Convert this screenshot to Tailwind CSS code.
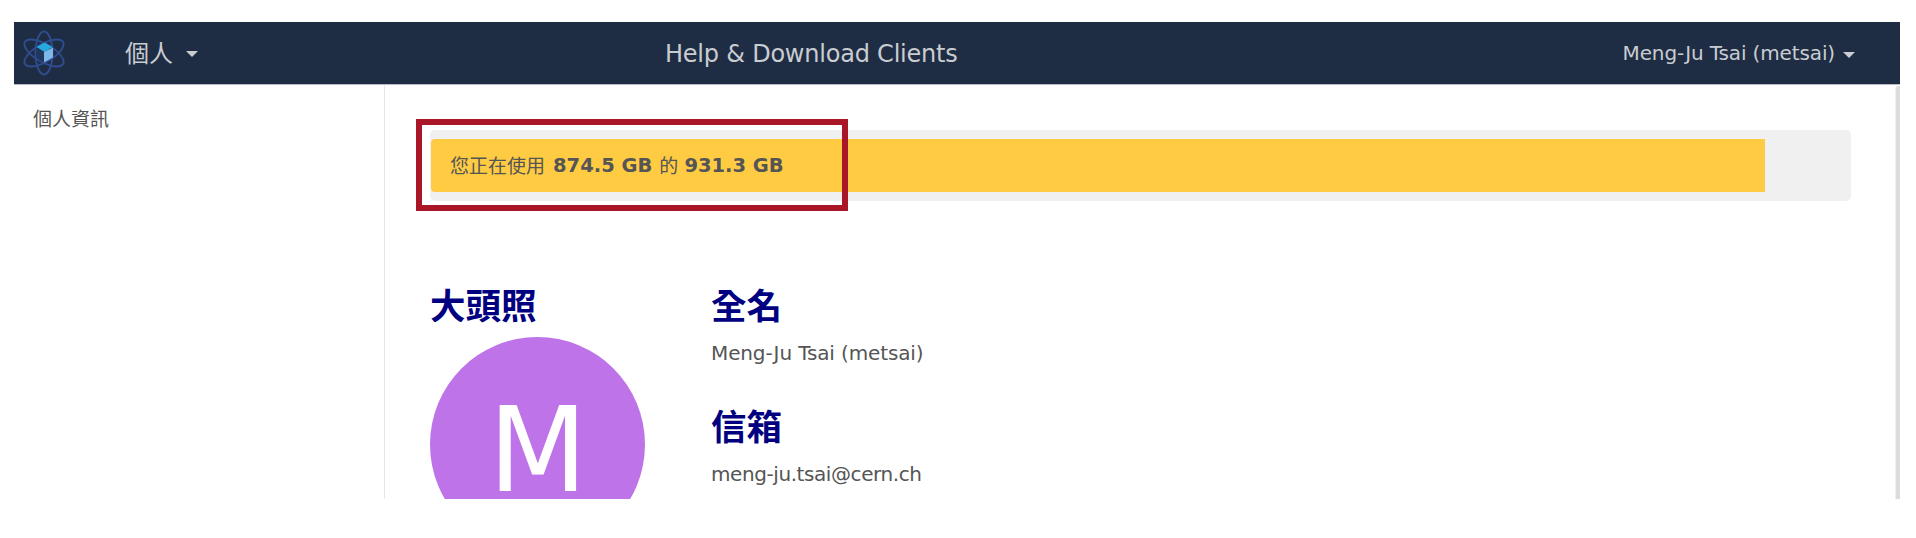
<!DOCTYPE html>
<html lang="zh-Hant">
<head>
<meta charset="utf-8">
<title>個人資訊</title>
<script src="https://cdn.jsdelivr.net/npm/@tailwindcss/browser@4"></script>
</head>
<body class="h-[538px] overflow-hidden bg-white pt-[22px] pl-[14px] font-['DejaVu_Sans','Noto_Sans_CJK_TC',sans-serif] text-[19px] text-[#555]">
<div class="flex h-[477px] w-[1886px] flex-col overflow-hidden">
  <header class="flex h-[63px] shrink-0 items-center border-b border-[#b5bac4] bg-[#1e2d44] text-[#c9ccd1]">
    <svg class="ml-[9px] h-[46px] w-[42px] shrink-0" viewBox="0 0 42 46" fill="none">
      <g stroke="#2f4d8e" stroke-width="1.9">
        <ellipse cx="21" cy="23" rx="8.500" ry="21.500"/>
        <ellipse cx="21" cy="23" rx="9" ry="22" transform="rotate(60 21 23)"/>
        <ellipse cx="21" cy="23" rx="9" ry="22" transform="rotate(-60 21 23)"/>
      </g>
      <path d="M13.500 17.500 21 22.500V32.500l-7.500-4.500z" fill="#20375f"/>
      <path d="M13.500 17 21.500 12.500l8 4.500-8 5z" fill="#25a9e0"/>
      <path d="M21 22 30 17.500v10L21 32.500z" fill="#7cb8e8"/>
    </svg>
    <div class="ml-[60px] flex w-[416px] items-center text-[24px] leading-[36px]">
      <span class="pt-px">個人</span>
      <svg class="mt-px ml-[13px] h-[6px] w-[12px]" viewBox="0 0 12 6"><path d="M0 0h12L6 6z" fill="currentColor"/></svg>
    </div>
    <div class="ml-[124px] pt-[2px] whitespace-nowrap text-[24px] leading-[36px] tracking-[-0.22px]">Help &amp; Download Clients</div>
    <div class="mr-[45px] ml-auto flex items-center whitespace-nowrap text-[20px] leading-[30px] tracking-[-0.13px]">
      <span>Meng-Ju Tsai (metsai)</span>
      <svg class="mt-[3px] ml-[8px] h-[6px] w-[12px]" viewBox="0 0 12 6"><path d="M0 0h12L6 6z" fill="currentColor"/></svg>
    </div>
  </header>
  <div class="flex h-[414px]">
    <aside class="w-[371px] shrink-0 border-r border-[#e7e7e7] pt-[20px] pl-[19px]">
      <div class="leading-[28px]">個人資訊</div>
    </aside>
    <main class="flex-1 pt-[45px] pl-[45px]">
      <div class="relative h-[71px] w-[1421px] rounded-[5px] bg-[#f0f0f0] pt-[9px] pl-px">
        <div class="flex h-[53px] w-[1334px] items-center rounded-l-[4px] bg-[#ffcb43] pt-px pl-[19px] leading-[28px] whitespace-pre"><span>您正在使用</span><b class="ml-[8px] text-[19.500px]">874.5 GB</b><span class="ml-[7px]">的</span><b class="ml-[6px] text-[19.500px]">931.3 GB</b></div>
        <div class="absolute top-[-11px] left-[-14px] h-[92px] w-[432px] border-[6px] border-[#a91628]"></div>
      </div>
      <div class="mt-[86px] flex">
        <section class="w-[281px]">
          <h2 class="text-[35.500px] leading-[40px] font-bold text-[#000080]">大頭照</h2>
          <div class="mt-[10px] flex h-[215px] w-[215px] justify-center rounded-full bg-[#be74e8] text-[118px] leading-[227px] text-white"><span class="scale-x-[0.97]">M</span></div>
        </section>
        <section>
          <h2 class="text-[35.500px] leading-[40px] font-bold text-[#000080]">全名</h2>
          <p class="mt-[12px] text-[20px] leading-[28px] tracking-[-0.13px]">Meng-Ju Tsai (metsai)</p>
          <h2 class="mt-[41px] text-[35.500px] leading-[40px] font-bold text-[#000080]">信箱</h2>
          <p class="mt-[12px] text-[20px] leading-[28px] tracking-[-0.42px]">meng-ju.tsai@cern.ch</p>
        </section>
      </div>
    </main>
    <div class="mt-px w-[5px] shrink-0 rounded-tl-[3px] border-l border-[#efefef] bg-[#dcdcdc]"></div>
  </div>
</div>
</body>
</html>
